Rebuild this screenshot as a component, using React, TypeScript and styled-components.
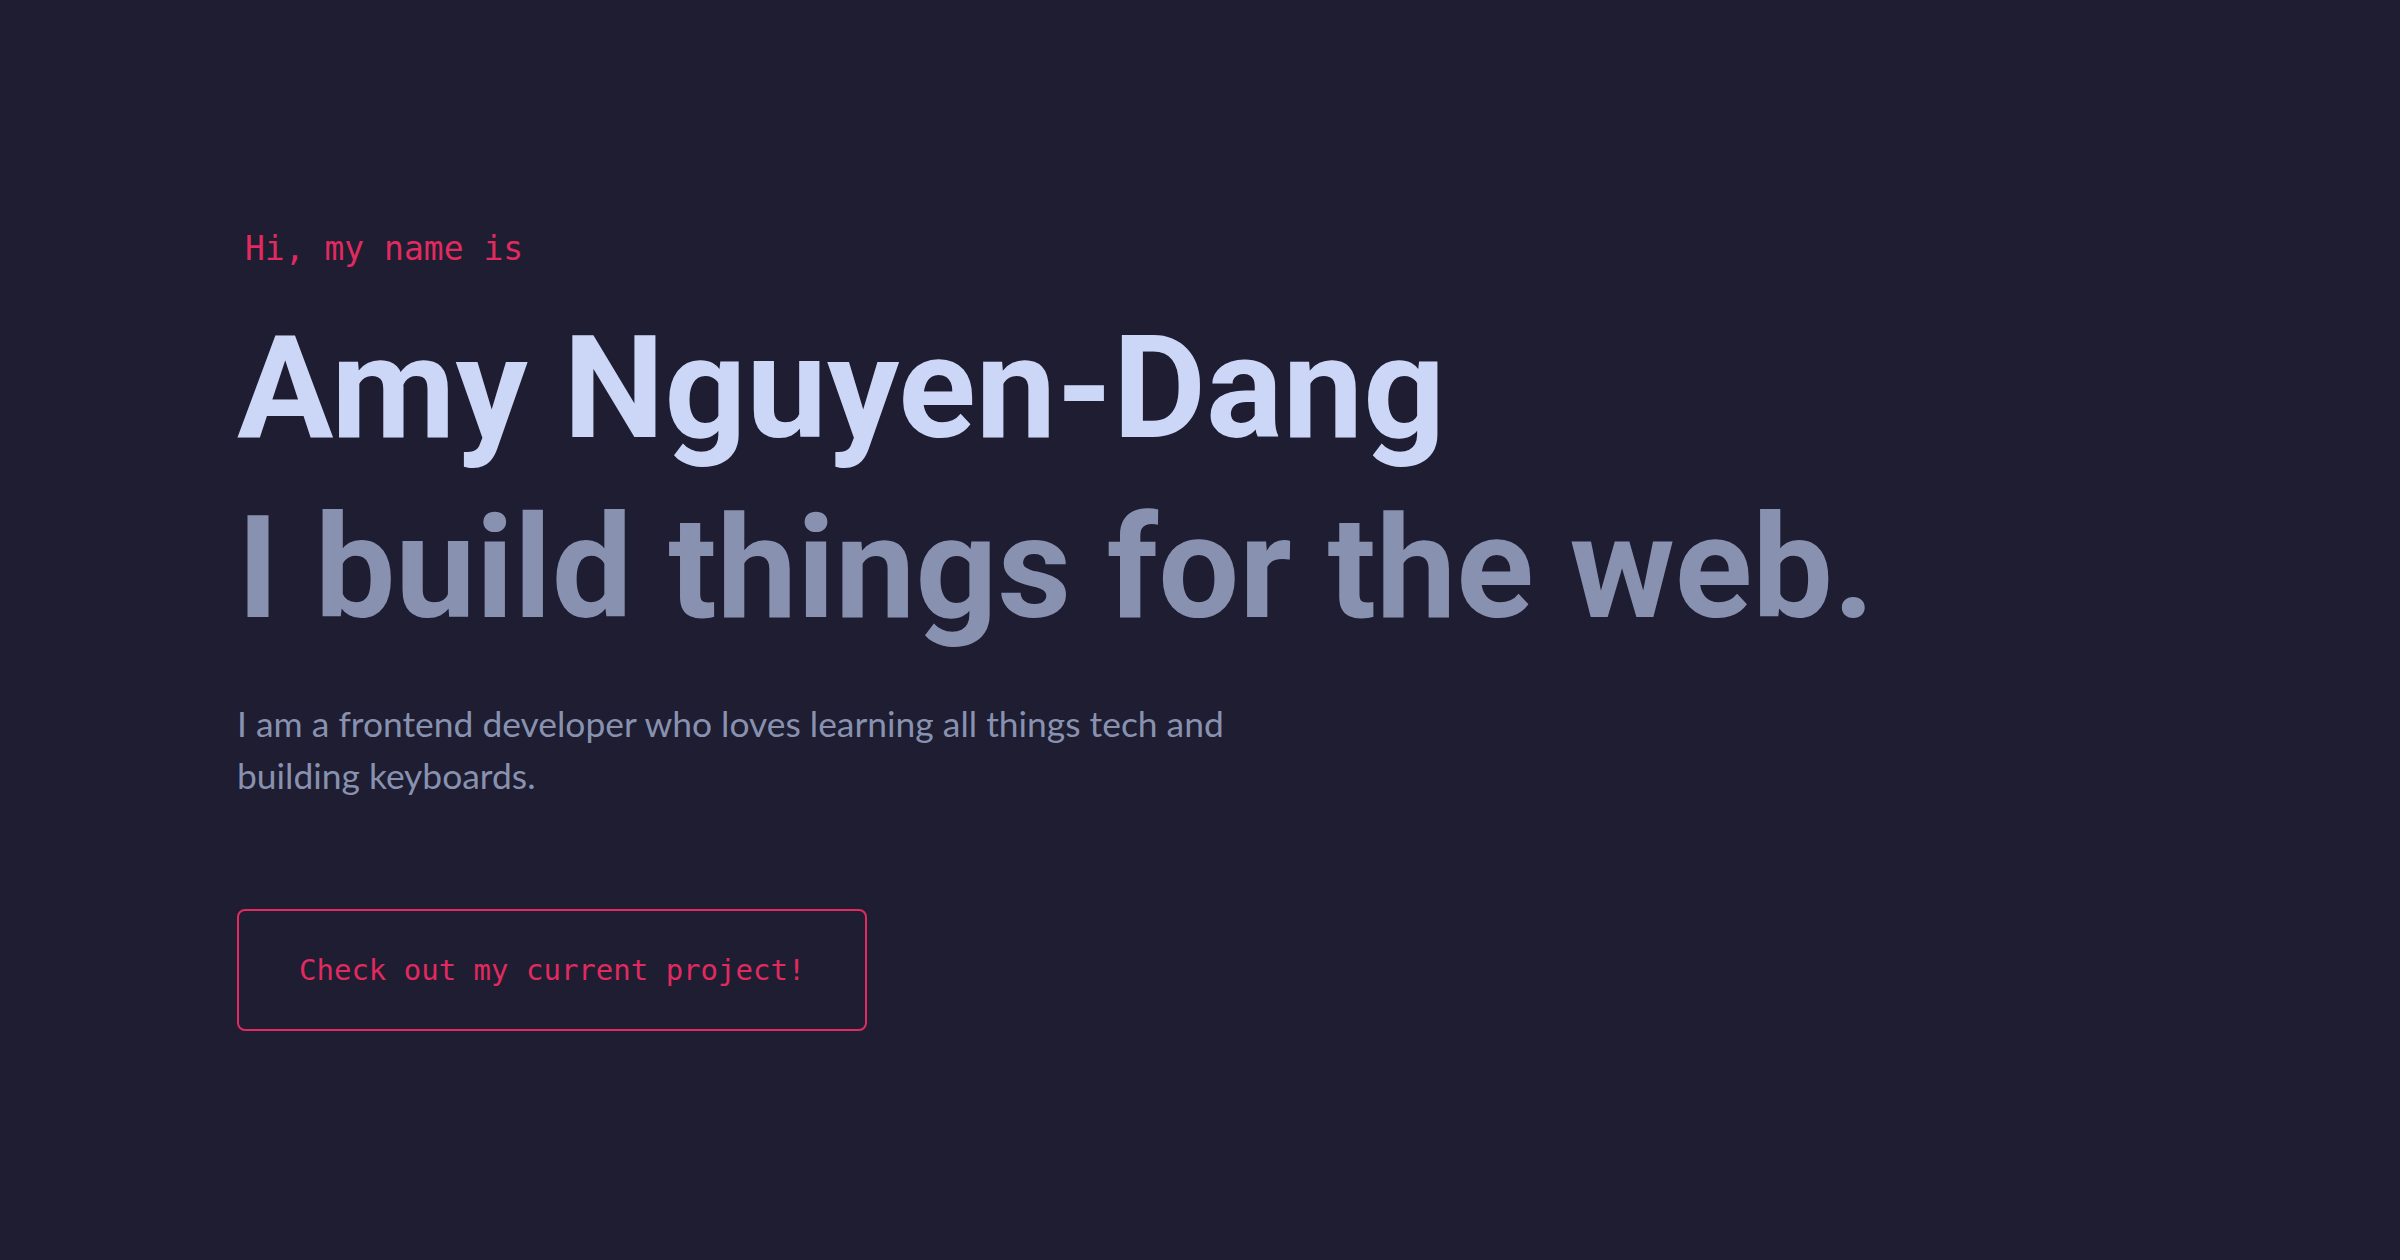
import React from "react";
import styled, { createGlobalStyle } from "styled-components";

const Global = createGlobalStyle`
  html, body { margin: 0; padding: 0; background: #1e1d31; }
  body { font-family: "Lato", sans-serif; }
`;

const Page = styled.main`
  min-height: 1260px;
  background: #1e1d31;
  padding: 232px 0 0 237px;
  box-sizing: border-box;
  display: flex;
  flex-direction: column;
  align-items: flex-start;
`;

const Hello = styled.h1`
  margin: 0 0 33px 8px;
  font-family: "DejaVu Sans Mono", monospace;
  font-weight: 400;
  font-size: 33px;
  line-height: 33px;
  color: #e02a60;
`;

const BigHeading = styled.h2<{ $tone: string }>`
  margin: 0;
  font-family: "Roboto", sans-serif;
  font-weight: 700;
  font-size: 143.5px;
  line-height: 180px;
  white-space: nowrap;
  color: ${(p) => p.$tone};
`;

const Intro = styled.p`
  margin: 40px 0 0;
  max-width: 1040px;
  font-family: "Lato", sans-serif;
  font-weight: 400;
  font-size: 35.4px;
  line-height: 52px;
  color: #8892b0;
`;

const Cta = styled.a`
  display: inline-flex;
  margin-top: 107px;
  padding: 41px 60px;
  border: 2px solid #e02a60;
  border-radius: 8px;
  font-family: "DejaVu Sans Mono", monospace;
  font-size: 29px;
  line-height: 36px;
  color: #e02a60;
  text-decoration: none;
`;

export default function App() {
  return (
    <>
      <Global />
      <Page>
        <Hello>Hi, my name is</Hello>
        <BigHeading $tone="#ccd6f6">Amy Nguyen-Dang</BigHeading>
        <BigHeading $tone="#8892b0">I build things for the web.</BigHeading>
        <Intro>
          I am a frontend developer who loves learning all things tech and building keyboards.
        </Intro>
        <Cta href="#">Check out my current project!</Cta>
      </Page>
    </>
  );
}
